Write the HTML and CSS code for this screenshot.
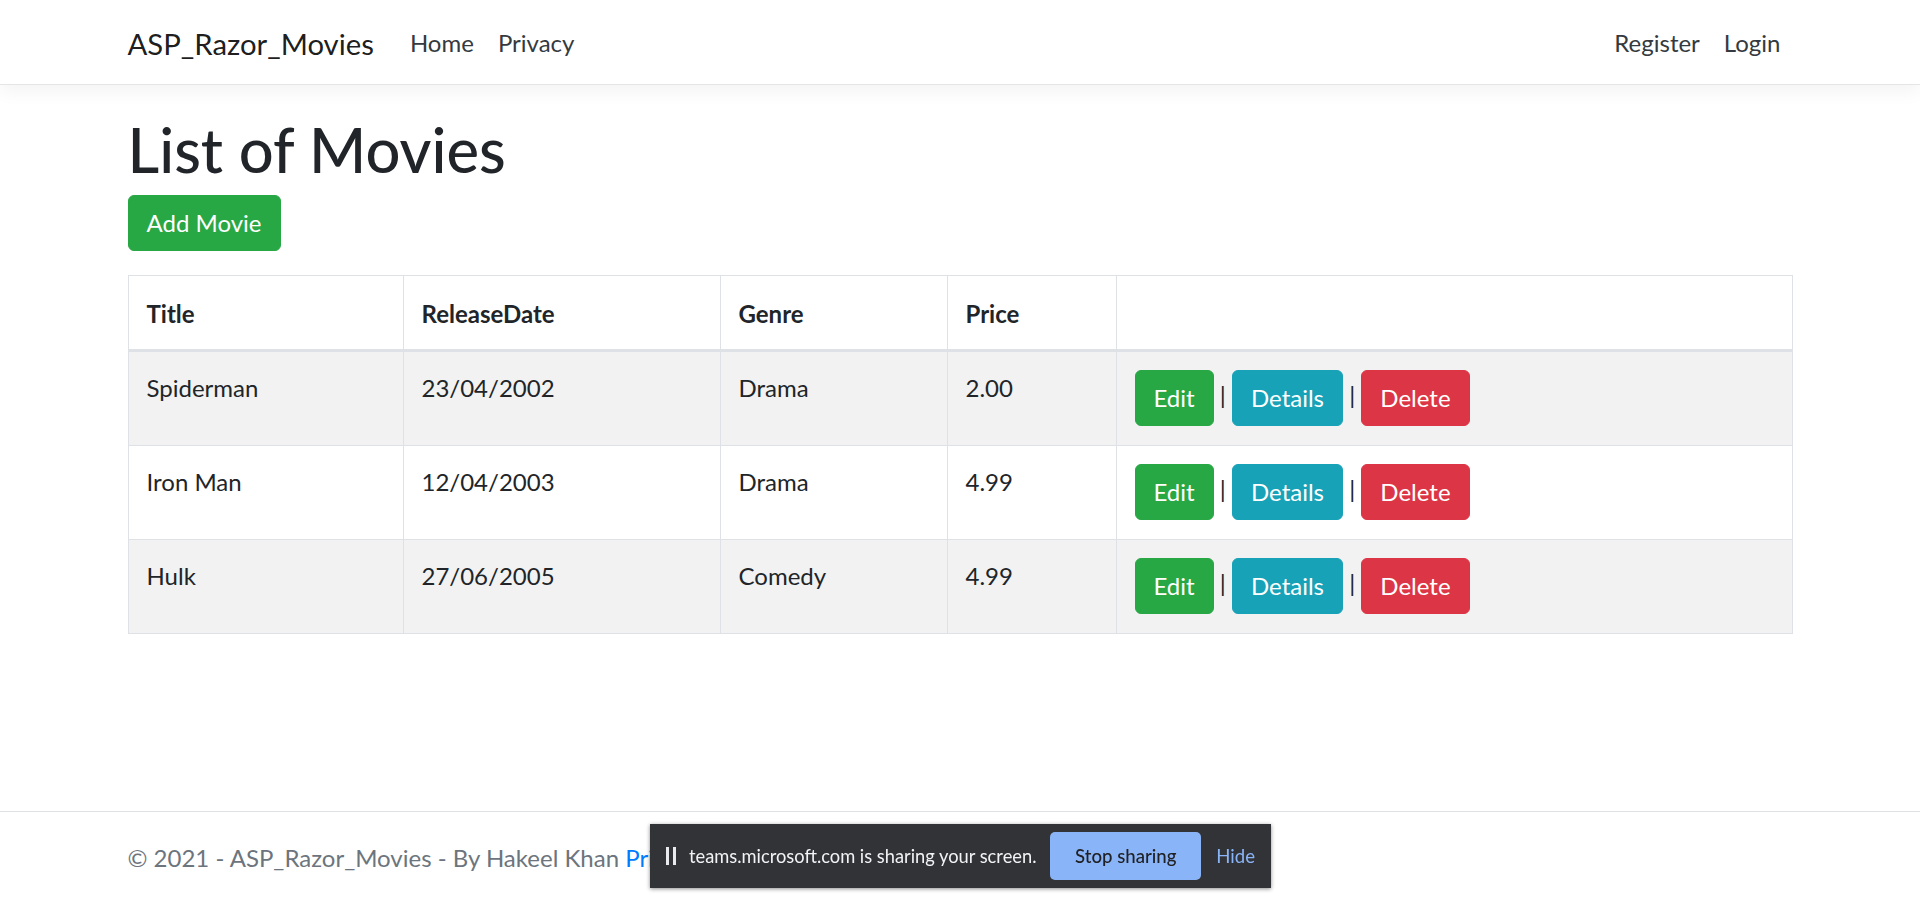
FILE: index.html
```html
<!DOCTYPE html>
<html lang="en">
<head>
<meta charset="utf-8">
<title>Index - ASP_Razor_Movies</title>
<link rel="stylesheet" href="styles.css">
</head>
<body>
<div class="page">
  <header class="site-header">
    <nav class="navbar">
      <div class="container nav-inner">
        <a class="brand" href="#">ASP_Razor_Movies</a>
        <div class="nav-collapse">
          <ul class="nav-list">
            <li><a class="nav-link" href="#">Home</a></li>
            <li><a class="nav-link" href="#">Privacy</a></li>
          </ul>
          <ul class="nav-list">
            <li><a class="nav-link" href="#">Register</a></li>
            <li><a class="nav-link" href="#">Login</a></li>
          </ul>
        </div>
      </div>
    </nav>
  </header>

  <main class="container main">
    <h1 class="page-title">List of Movies</h1>
    <p class="actions-top"><a class="btn btn-success" href="#">Add Movie</a></p>

    <table class="movies">
      <colgroup>
        <col class="c-title">
        <col class="c-date">
        <col class="c-genre">
        <col class="c-price">
        <col class="c-actions">
      </colgroup>
      <thead>
        <tr>
          <th>Title</th>
          <th>ReleaseDate</th>
          <th>Genre</th>
          <th>Price</th>
          <th></th>
        </tr>
      </thead>
      <tbody>
        <tr>
          <td>Spiderman</td>
          <td>23/04/2002</td>
          <td>Drama</td>
          <td>2.00</td>
          <td class="cell-actions"><a class="btn btn-success" href="#">Edit</a> | <a class="btn btn-info" href="#">Details</a> | <a class="btn btn-danger" href="#">Delete</a></td>
        </tr>
        <tr>
          <td>Iron Man</td>
          <td>12/04/2003</td>
          <td>Drama</td>
          <td>4.99</td>
          <td class="cell-actions"><a class="btn btn-success" href="#">Edit</a> | <a class="btn btn-info" href="#">Details</a> | <a class="btn btn-danger" href="#">Delete</a></td>
        </tr>
        <tr>
          <td>Hulk</td>
          <td>27/06/2005</td>
          <td>Comedy</td>
          <td>4.99</td>
          <td class="cell-actions"><a class="btn btn-success" href="#">Edit</a> | <a class="btn btn-info" href="#">Details</a> | <a class="btn btn-danger" href="#">Delete</a></td>
        </tr>
      </tbody>
    </table>
  </main>

  <footer class="footer">
    <div class="container">&copy; 2021 - ASP_Razor_Movies - By Hakeel Khan <a class="footer-link" href="#">Privacy</a></div>
  </footer>

  <div class="share-bar">
    <svg class="pause-icon" width="12" height="18" viewBox="0 0 12 18" aria-hidden="true">
      <rect x="1" y="0" width="3" height="18" fill="#e8eaed"/>
      <rect x="8" y="0" width="3" height="18" fill="#e8eaed"/>
    </svg>
    <span class="share-text">teams.microsoft.com is sharing your screen.</span>
    <button class="share-stop" type="button">Stop sharing</button>
    <button class="share-hide" type="button">Hide</button>
  </div>
</div>
</body>
</html>
```

FILE: styles.css
```css
* { box-sizing: border-box; }

html, body {
  margin: 0;
  padding: 0;
  background: #fff;
}

body {
  font-family: "Lato", "Liberation Sans", sans-serif;
  font-size: 24px;
  line-height: 1.5;
  color: #212529;
}

a { text-decoration: none; }

.page {
  height: 100vh;
  display: flex;
  flex-direction: column;
  overflow: hidden;
}

.container {
  width: 100%;
  max-width: 1710px;
  margin: 0 auto;
  padding: 0 22.5px;
}

/* Navbar */
.site-header {
  flex: 0 0 auto;
}

.navbar {
  padding: 12px 24px;
  background: #fff;
  border-bottom: 1px solid #e5e5e5;
  box-shadow: 0 6px 18px rgba(0, 0, 0, 0.05);
}

.nav-inner {
  display: flex;
  align-items: center;
}

.brand {
  font-size: 29.3px;
  line-height: 45px;
  padding: 8.5px 0 6.5px;
  margin-right: 24px;
  color: rgba(0, 0, 0, 0.9);
  white-space: nowrap;
}

.nav-collapse {
  flex: 1;
  display: flex;
  justify-content: space-between;
}

.nav-list {
  list-style: none;
  margin: 0;
  padding: 0;
  display: flex;
}

.nav-link {
  display: block;
  padding: 13px 12px 11px;
  color: #343a40;
}

/* Main */
.main {
  flex: 1 0 auto;
  padding-top: 26px;
}

.page-title {
  margin: 0 0 12px;
  font-size: 61.5px;
  line-height: 72px;
  font-weight: 500;
  color: #212529;
  padding-top: 2px;
  height: 72px;
  box-sizing: content-box;
}

.actions-top {
  margin: -2px 0 24px;
}

.btn {
  display: inline-block;
  vertical-align: middle;
  padding: 9px 18px;
  font-size: 24px;
  line-height: 36px;
  border: 1.5px solid transparent;
  border-radius: 6px;
  color: #fff;
  white-space: nowrap;
}

.btn-success { background: #28a745; border-color: #28a745; }
.btn-info { background: #17a2b8; border-color: #17a2b8; }
.btn-danger { background: #dc3545; border-color: #dc3545; }

/* Table */
.movies {
  width: 100%;
  table-layout: fixed;
  border-collapse: collapse;
  border: 1px solid #dee2e6;
  margin-bottom: 24px;
}

.c-title { width: 275px; }
.c-date { width: 317px; }
.c-genre { width: 227px; }
.c-price { width: 169px; }

.movies th,
.movies td {
  padding: 18px 18px 17px;
  border: 1px solid #dee2e6;
  text-align: left;
  vertical-align: top;
}

.movies th {
  font-weight: 700;
  vertical-align: top;
  padding: 20px 18px 17px;
  border-bottom: 3px solid #dee2e6;
}

.movies td.cell-actions {
  padding: 18px 18px 19px;
}

.movies tbody tr:nth-child(odd) {
  background: rgba(0, 0, 0, 0.05);
}

/* Footer */
.footer {
  flex: 0 0 87px;
  border-top: 1px solid #dee2e6;
  padding-top: 6px;
  line-height: 80px;
  color: #6c757d;
  white-space: nowrap;
}

.footer-link { color: #007bff; }

/* Screen share overlay bar */
.share-bar {
  position: fixed;
  left: 650px;
  top: 824px;
  width: 621px;
  height: 64px;
  background: #323337;
  box-shadow: 0 1px 4px rgba(0, 0, 0, 0.45);
  display: flex;
  align-items: center;
  padding: 0 16px 0 15px;
  font-family: "Lato", "Liberation Sans", sans-serif;
  font-size: 18.3px;
  line-height: 24px;
  color: #f1f3f4;
}

.pause-icon {
  flex: 0 0 auto;
  margin-right: 12px;
}

.share-text {
  white-space: nowrap;
}

.share-stop {
  margin-left: auto;
  width: 151px;
  height: 48px;
  border: 0;
  border-radius: 5px;
  background: #8ab4f8;
  color: #202124;
  font-family: inherit;
  font-size: 18.6px;
  font-weight: 500;
  padding: 0;
}

.share-hide {
  margin-left: 15px;
  border: 0;
  background: transparent;
  color: #8ab4f8;
  font-family: inherit;
  font-size: 18.6px;
  padding: 0;
}
```
